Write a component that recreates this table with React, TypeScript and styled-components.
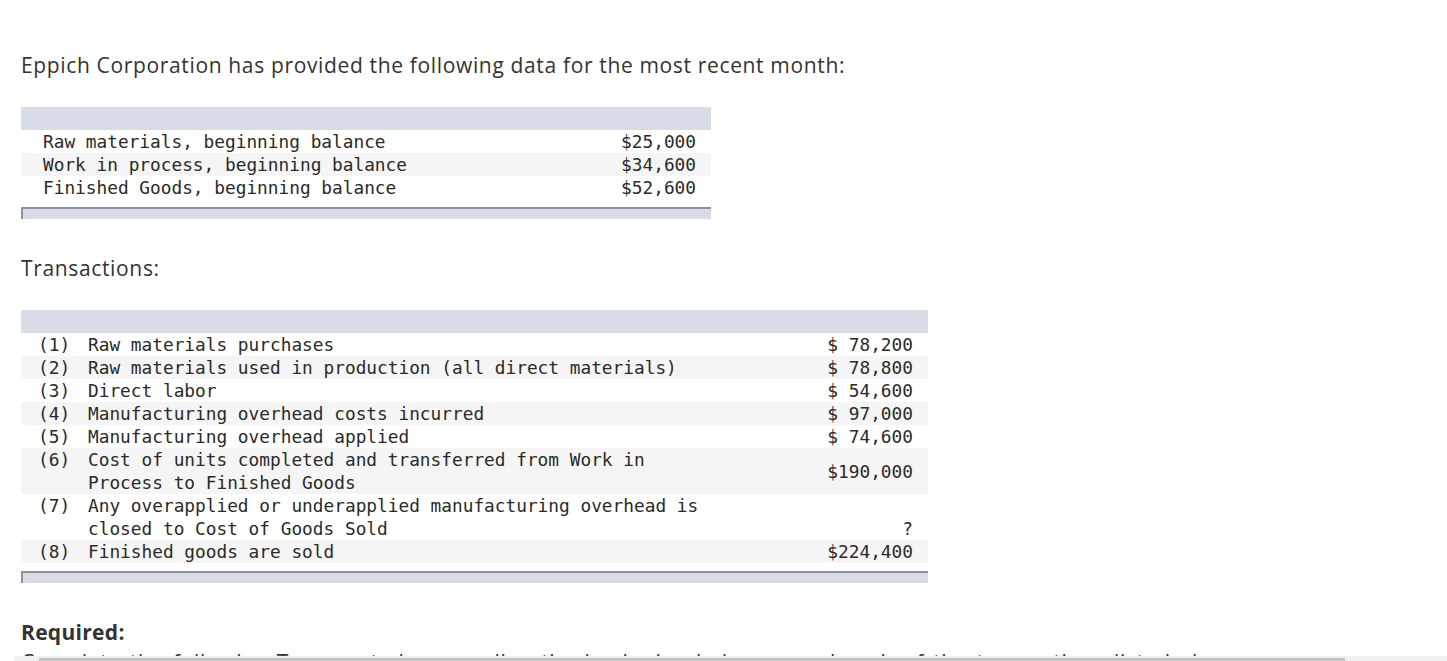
import React from 'react';
import styled, { createGlobalStyle } from 'styled-components';

const GlobalStyle = createGlobalStyle`
  html, body {
    margin: 0;
    padding: 0;
    background: #ffffff;
    overflow: hidden;
  }
`;

const balances = [
  { label: 'Raw materials, beginning balance', amount: '$25,000' },
  { label: 'Work in process, beginning balance', amount: '$34,600' },
  { label: 'Finished Goods, beginning balance', amount: '$52,600' },
];

type Align = 'top' | 'middle' | 'bottom';

const transactions: { no: string; lines: string[]; amount: string; align: Align }[] = [
  { no: '(1)', lines: ['Raw materials purchases'], amount: '$ 78,200', align: 'middle' },
  {
    no: '(2)',
    lines: ['Raw materials used in production (all direct materials)'],
    amount: '$ 78,800',
    align: 'middle',
  },
  { no: '(3)', lines: ['Direct labor'], amount: '$ 54,600', align: 'middle' },
  { no: '(4)', lines: ['Manufacturing overhead costs incurred'], amount: '$ 97,000', align: 'middle' },
  { no: '(5)', lines: ['Manufacturing overhead applied'], amount: '$ 74,600', align: 'middle' },
  {
    no: '(6)',
    lines: ['Cost of units completed and transferred from Work in', 'Process to Finished Goods'],
    amount: '$190,000',
    align: 'middle',
  },
  {
    no: '(7)',
    lines: ['Any overapplied or underapplied manufacturing overhead is', 'closed to Cost of Goods Sold'],
    amount: '?',
    align: 'bottom',
  },
  { no: '(8)', lines: ['Finished goods are sold'], amount: '$224,400', align: 'middle' },
];

const App = () => {
  return (
    <>
      <GlobalStyle />
      <Page>
        <Content>
          <Paragraph>Eppich Corporation has provided the following data for the most recent month:</Paragraph>

          <DataTable $width={690}>
            <HeadBand />
            {balances.map((row, i) => (
              <Row key={row.label} $striped={i % 2 === 1}>
                <BalanceLabel>{row.label}</BalanceLabel>
                <Amount $align="middle">{row.amount}</Amount>
              </Row>
            ))}
            <FootBand />
          </DataTable>

          <Paragraph>Transactions:</Paragraph>

          <DataTable $width={907}>
            <HeadBand />
            {transactions.map((row, i) => (
              <Row key={row.no} $striped={i % 2 === 1}>
                <Num>{row.no}</Num>
                <Desc>
                  {row.lines.map((line) => (
                    <div key={line}>{line}</div>
                  ))}
                </Desc>
                <Amount $align={row.align}>{row.amount}</Amount>
              </Row>
            ))}
            <FootBand />
          </DataTable>

          <Heading>Required:</Heading>
          <Paragraph $tight>
            Complete the following T-accounts by recording the beginning balances and each of the
            transactions listed above.
          </Paragraph>
        </Content>
        <ScrollTrack>
          <ScrollThumb />
        </ScrollTrack>
      </Page>
    </>
  );
};

const Page = styled.div`
  position: relative;
  width: 1447px;
  height: 661px;
  overflow: hidden;
`;

const Content = styled.div`
  padding: 50px 0 0 21px;
  font-family: 'Open Sans', Lato, sans-serif;
  color: #333333;
`;

const Paragraph = styled.p<{ $tight?: boolean }>`
  margin: 0 0 ${(p) => (p.$tight ? 0 : 27)}px;
  font-size: 21px;
  line-height: 30px;
  letter-spacing: 0.65px;
  word-spacing: ${(p) => (p.$tight ? 3 : 0)}px;
  white-space: nowrap;
`;

const Heading = styled.h3`
  margin: 0;
  font-size: 21px;
  line-height: 30px;
  letter-spacing: 0.3px;
  font-weight: 700;
`;

const DataTable = styled.div<{ $width: number }>`
  width: ${(p) => p.$width}px;
  margin-bottom: 34px;
  font-family: 'DejaVu Sans Mono', 'Liberation Mono', monospace;
  font-size: 17.8px;
  color: #2a2a2a;
`;

const HeadBand = styled.div`
  height: 23px;
  background: #d8dce6;
`;

const FootBand = styled.div`
  height: 10px;
  margin-top: 8px;
  background: #d8dce6;
  border-top: 2px solid #8e929a;
  border-left: 2px solid #8e929a;
`;

const Row = styled.div<{ $striped: boolean }>`
  display: flex;
  align-items: stretch;
  background: ${(p) => (p.$striped ? '#f5f5f5' : '#ffffff')};
  line-height: 23px;
`;

const BalanceLabel = styled.div`
  flex: 1;
  padding-left: 22px;
  white-space: pre;
`;

const Num = styled.div`
  width: 67px;
  padding-left: 17px;
  box-sizing: border-box;
  white-space: pre;
`;

const Desc = styled.div`
  flex: 1;
  white-space: pre;
`;

const Amount = styled.div<{ $align: Align }>`
  display: flex;
  align-items: ${(p) => (p.$align === 'bottom' ? 'flex-end' : p.$align === 'top' ? 'flex-start' : 'center')};
  justify-content: flex-end;
  padding-right: 15px;
  white-space: pre;
`;

const ScrollTrack = styled.div`
  position: absolute;
  left: 14px;
  right: 0;
  bottom: 0;
  height: 5px;
  background: #f0f0f0;
`;

const ScrollThumb = styled.div`
  position: absolute;
  left: 25px;
  width: 1306px;
  bottom: 0;
  height: 3px;
  background: #c1c1c1;
`;

export default App;
